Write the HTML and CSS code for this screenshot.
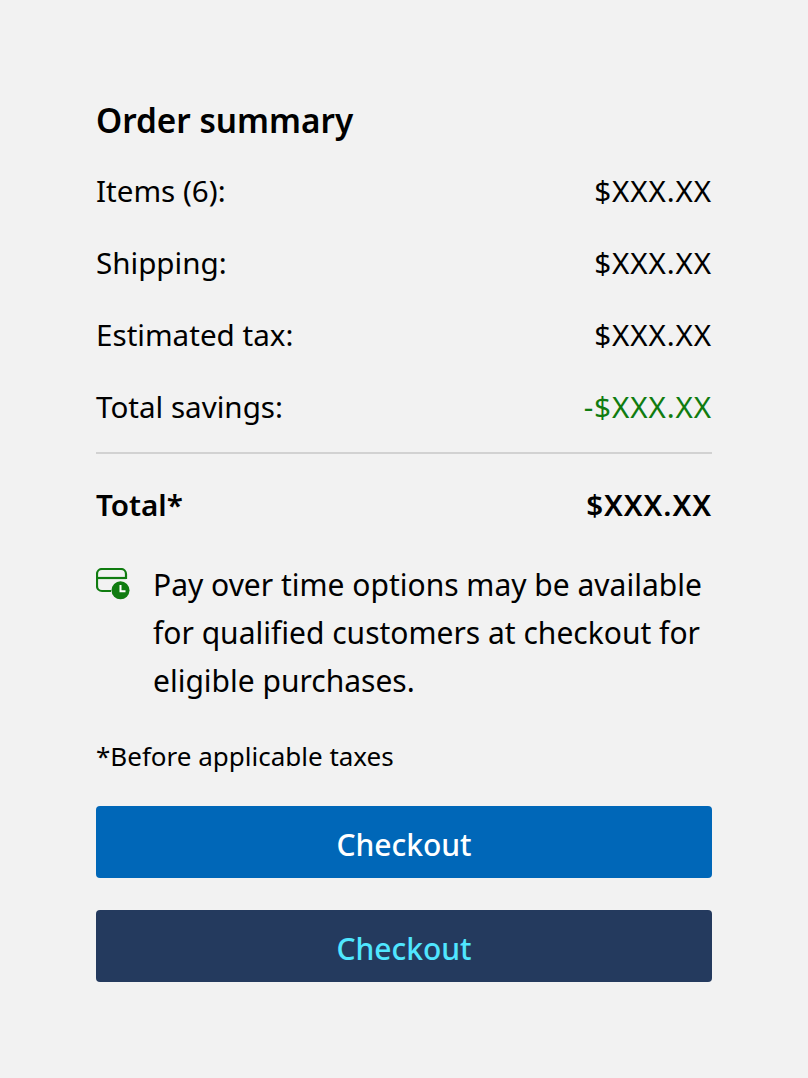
FILE: index.html
```html
<!DOCTYPE html>
<html lang="en">
<head>
    <meta charset="UTF-8">
    <meta name="viewport" content="width=device-width, initial-scale=1.0">
    <title>Order summary</title>
    <link rel="stylesheet" href="styles.css">
</head>
<body>
    <div class="summary">
        <h1>Order summary</h1>
        <div class="row"><span>Items (6):</span><span class="amount">$XXX.XX</span></div>
        <div class="row"><span>Shipping:</span><span class="amount">$XXX.XX</span></div>
        <div class="row"><span>Estimated tax:</span><span class="amount">$XXX.XX</span></div>
        <div class="row"><span>Total savings:</span><span class="amount savings">-$XXX.XX</span></div>
        <div class="row total"><span>Total*</span><span class="amount">$XXX.XX</span></div>
        <div class="note">
            <svg class="note-icon" width="34" height="32" viewBox="0 0 34 32" fill="none">
                <path d="M15 23H6A5 5 0 0 1 1 18V6A5 5 0 0 1 6 1H25A5 5 0 0 1 30 6V11" stroke="#107c10" stroke-width="2.2"/>
                <path d="M1 10H30" stroke="#107c10" stroke-width="2.2"/>
                <circle cx="24.5" cy="22.3" r="9" fill="#107c10"/>
                <path d="M24.5 17V23.3H29.5" stroke="#fff" stroke-width="2"/>
            </svg>
            <p>Pay over time options may be available for qualified customers at checkout for eligible purchases.</p>
        </div>
        <p class="fineprint">*Before applicable taxes</p>
        <button class="btn btn-primary" type="button">Checkout</button>
        <button class="btn btn-dark" type="button">Checkout</button>
    </div>
</body>
</html>
```

FILE: styles.css
```css
body {
    margin: 0;
    background-color: #f2f2f2;
    color: #000;
    font-family: 'Noto Sans', 'Open Sans', sans-serif;
}
.summary {
    padding: 96px;
}
h1 {
    margin: 0 0 10px;
    font-size: 33.3px;
    font-weight: 600;
    line-height: 48px;
}
.row {
    display: flex;
    justify-content: space-between;
    align-items: center;
    height: 72px;
    font-size: 29.6px;
}
.amount {
    letter-spacing: 0.9px;
}
.savings {
    color: #107c10;
}
.total {
    height: 97px;
    margin-top: 10px;
    padding-top: 2px;
    border-top: 2px solid #d2d2d2;
    font-weight: 600;
}
.note {
    display: flex;
    gap: 23px;
    margin-top: 8px;
}
.note-icon {
    flex: none;
    margin-top: 7px;
}
.note p {
    margin: 0;
    font-size: 30px;
    line-height: 48px;
}
.fineprint {
    margin: 31px 0 0;
    font-size: 26px;
    line-height: 40px;
}
.btn {
    display: block;
    width: 100%;
    height: 72px;
    margin-top: 30px;
    padding: 4px 0 0;
    border: none;
    border-radius: 4px;
    font-family: inherit;
    font-size: 30px;
    font-weight: 500;
}
.btn-primary {
    background-color: #0067b8;
    color: #fff;
}
.btn-dark {
    margin-top: 32px;
    background-color: #243a5e;
    color: #50e6ff;
}
```
